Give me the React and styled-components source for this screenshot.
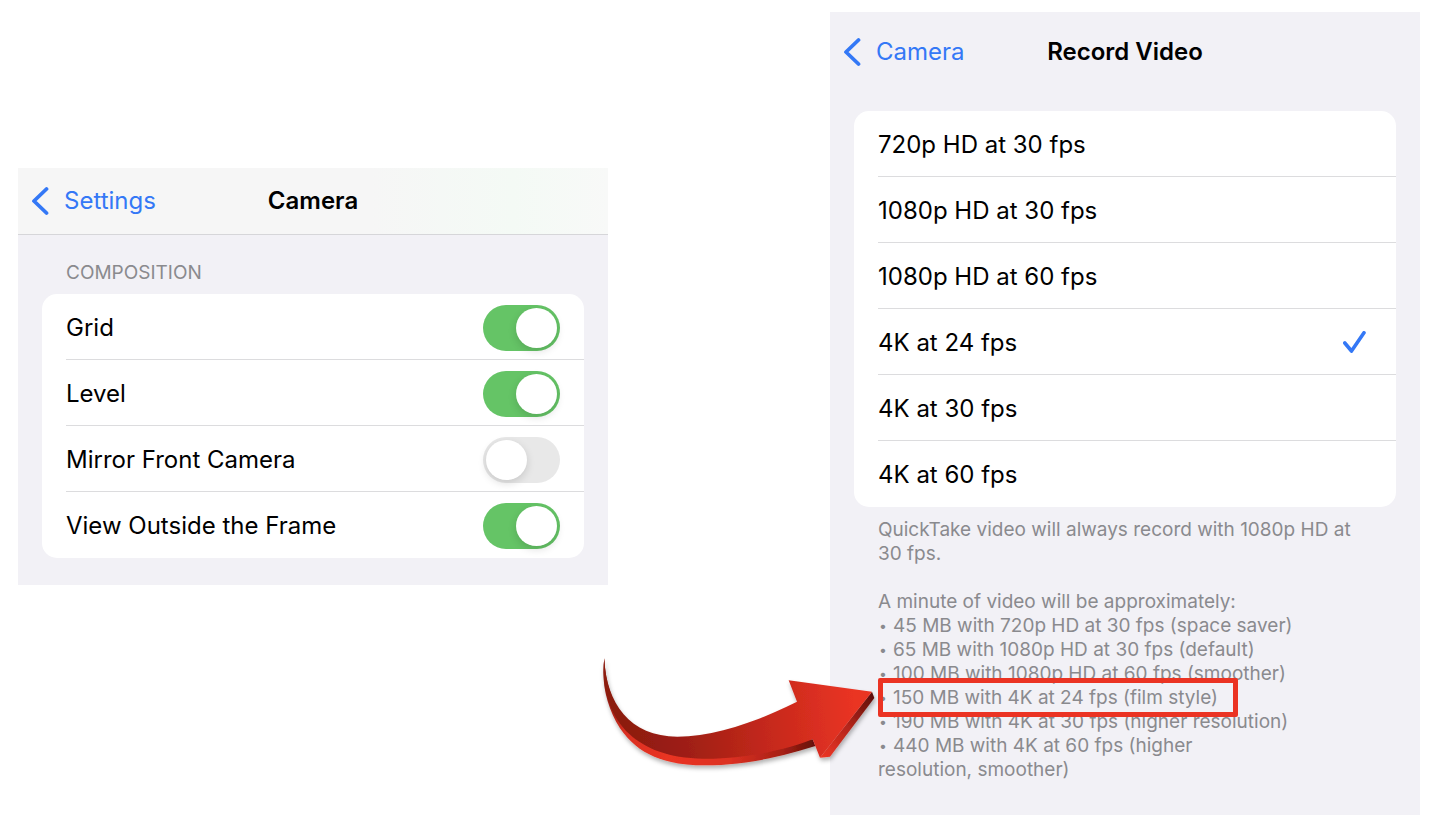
import React, { useState } from "react";
import styled, { createGlobalStyle } from "styled-components";

const compositionOptions = [
  { id: "grid", label: "Grid", on: true },
  { id: "level", label: "Level", on: true },
  { id: "mirror", label: "Mirror Front Camera", on: false },
  { id: "outside", label: "View Outside the Frame", on: true },
];

const videoFormats = [
  "720p HD at 30 fps",
  "1080p HD at 30 fps",
  "1080p HD at 60 fps",
  "4K at 24 fps",
  "4K at 30 fps",
  "4K at 60 fps",
];

const BackIcon = () => (
  <svg width="18" height="30" viewBox="0 0 18 30" fill="none" aria-hidden="true">
    <path
      d="M15.5 3 L3 15 L15.5 27"
      stroke="#3478f6"
      strokeWidth="3.8"
      strokeLinecap="round"
      strokeLinejoin="round"
    />
  </svg>
);

const CheckIcon = () => (
  <svg width="24" height="24" viewBox="0 0 24 24" fill="none" aria-hidden="true">
    <path
      d="M2.8 12 L9.5 20 L22 1.8"
      stroke="#3478f6"
      strokeWidth="3.6"
      strokeLinecap="round"
      strokeLinejoin="round"
    />
  </svg>
);

const Arrow = () => (
  <ArrowSvg viewBox="0 0 930 450" aria-hidden="true">
    <defs>
      <linearGradient id="face" gradientUnits="userSpaceOnUse" x1="100" y1="260" x2="830" y2="170">
        <stop offset="0" stopColor="#8c1a10" />
        <stop offset="0.25" stopColor="#9f1f14" />
        <stop offset="0.6" stopColor="#c7291c" />
        <stop offset="0.95" stopColor="#ea3424" />
      </linearGradient>
      <linearGradient id="rim" gradientUnits="userSpaceOnUse" x1="40" y1="0" x2="676" y2="0">
        <stop offset="0" stopColor="#8c1a10" />
        <stop offset="0.1" stopColor="#d92f20" />
        <stop offset="0.3" stopColor="#ea3424" />
        <stop offset="0.6" stopColor="#dc3022" />
        <stop offset="0.85" stopColor="#a52015" />
        <stop offset="1" stopColor="#64100a" />
      </linearGradient>
      <linearGradient id="tip" gradientUnits="userSpaceOnUse" x1="700" y1="350" x2="850" y2="165">
        <stop offset="0" stopColor="#ea3424" />
        <stop offset="0.5" stopColor="#b3251a" />
        <stop offset="1" stopColor="#5c0e08" />
      </linearGradient>
      <filter id="shadow" x="-10%" y="-10%" width="120%" height="130%">
        <feDropShadow dx="3" dy="9" stdDeviation="7" floodColor="#000" floodOpacity="0.3" />
      </filter>
    </defs>
    <g filter="url(#shadow)">
      <path
        d="M43 55 C33 130 50 200 90 265 C145 345 225 376 345 376 C450 376 560 355 676 318 L668 298 L300 320 L118 260 C70 200 45 130 43 55 Z"
        fill="url(#rim)"
      />
      <path d="M846 155 L853 174 L720 350 L690 353 Z" fill="url(#tip)" />
      <path
        d="M43 55 C48 190 120 290 262 290 C375 290 500 245 621 185 L596 121 L846 155 L690 353 L668 298 C560 340 440 357 340 356 C235 355 165 325 118 282 C55 225 33 130 43 55 Z"
        fill="url(#face)"
      />
    </g>
  </ArrowSvg>
);

const App = () => {
  const [options, setOptions] = useState(compositionOptions);
  const [format, setFormat] = useState("4K at 24 fps");

  const handleToggle = (id) => {
    setOptions(options.map((o) => (o.id === id ? { ...o, on: !o.on } : o)));
  };

  return (
    <>
      <GlobalStyle />
      <Page>
        <Panel $lowered>
          <Header $bar>
            <BackLink href="#settings">
              <BackIcon />
              Settings
            </BackLink>
            <Title>Camera</Title>
          </Header>
          <SectionLabel>COMPOSITION</SectionLabel>
          <Card>
            {options.map((o) => (
              <Row key={o.id} htmlFor={o.id}>
                <RowBody>
                  {o.label}
                  <Switch
                    id={o.id}
                    type="checkbox"
                    checked={o.on}
                    onChange={() => handleToggle(o.id)}
                  />
                </RowBody>
              </Row>
            ))}
          </Card>
        </Panel>

        <Panel>
          <Header>
            <BackLink href="#camera">
              <BackIcon />
              Camera
            </BackLink>
            <Title>Record Video</Title>
          </Header>
          <Card>
            {videoFormats.map((f) => (
              <Row key={f}>
                <RowBody $check>
                  {f}
                  <Radio
                    type="radio"
                    name="format"
                    checked={format === f}
                    onChange={() => setFormat(f)}
                  />
                  {format === f && <CheckIcon />}
                </RowBody>
              </Row>
            ))}
          </Card>
          <Notes>
            <p>QuickTake video will always record with 1080p HD at 30 fps.</p>
            <p>A minute of video will be approximately:</p>
            <ul>
              <li>45 MB with 720p HD at 30 fps (space saver)</li>
              <li>65 MB with 1080p HD at 30 fps (default)</li>
              <li>100 MB with 1080p HD at 60 fps (smoother)</li>
              <Highlighted>
                150 MB with 4K at 24 fps (film style)
                <Arrow />
              </Highlighted>
              <li>190 MB with 4K at 30 fps (higher resolution)</li>
              <li>
                440 MB with 4K at 60 fps (higher
                <br />
                resolution, smoother)
              </li>
            </ul>
          </Notes>
        </Panel>
      </Page>
    </>
  );
};

export default App;

const GlobalStyle = createGlobalStyle`
  * {
    box-sizing: border-box;
  }
  body {
    margin: 0;
    background: #fff;
    color: #000;
    font-family: Inter, "Liberation Sans", sans-serif;
    font-size: 24px;
  }
`;

const Page = styled.main`
  display: grid;
  grid-template-columns: 1fr 1fr;
  column-gap: 222px;
  align-items: start;
  padding: 12px 18px 10px;
`;

const Panel = styled.section`
  margin-top: ${(props) => (props.$lowered ? "156px" : "0")};
  padding-bottom: ${(props) => (props.$lowered ? "27px" : "33px")};
  background: #f2f1f6;
`;

const Header = styled.header`
  display: grid;
  grid-template-columns: 1fr auto 1fr;
  align-items: center;
  height: ${(props) => (props.$bar ? "67px" : "79px")};
  margin-bottom: ${(props) => (props.$bar ? "0" : "20px")};
  padding: 0 13px ${(props) => (props.$bar ? "1px" : "0")};
  background: ${(props) =>
    props.$bar
      ? "linear-gradient(90deg, #f6f6f6 60%, #f4faf5 84%, #f8f9f8 100%)"
      : "none"};
  border-bottom: ${(props) => (props.$bar ? "1px solid #d6d6d9" : "none")};
`;

const BackLink = styled.a`
  display: flex;
  align-items: center;
  gap: 15px;
  color: #3478f6;
  text-decoration: none;
`;

const Title = styled.h1`
  margin: 0;
  font-size: 24px;
  font-weight: 600;
`;

const SectionLabel = styled.h2`
  margin: 0;
  padding: 26px 48px 9px;
  color: #8a8a8e;
  font-size: 19px;
  font-weight: 400;
  line-height: 24px;
`;

const Card = styled.div`
  margin: 0 24px;
  overflow: hidden;
  background: #fff;
  border-radius: 15px;
`;

const RowBody = styled.span`
  display: flex;
  align-items: center;
  justify-content: space-between;
  height: 66px;
  padding-top: 2px;
  padding-right: ${(props) => (props.$check ? "30px" : "24px")};
  border-bottom: 1px solid #dcdcde;
`;

const Row = styled.label`
  display: block;
  padding-left: 24px;

  &:last-child ${RowBody} {
    border-bottom-color: transparent;
  }
`;

const Switch = styled.input`
  appearance: none;
  display: flex;
  width: 77px;
  height: 46px;
  margin: 0;
  padding: 3px;
  border-radius: 23px;
  background: #e8e8e8;

  &::before {
    content: "";
    width: 41px;
    height: 40px;
    border-radius: 50%;
    background: #fff;
    box-shadow: 0 3px 8px rgba(0, 0, 0, 0.14);
  }
  &:checked {
    justify-content: flex-end;
    background: #65c466;
  }
`;

const Radio = styled.input`
  appearance: none;
  width: 0;
  margin: 0 auto 0 0;
`;

const Notes = styled.div`
  padding: 11px 48px 0;
  color: #8a8a8e;
  font-size: 19px;
  line-height: 24px;

  p {
    margin: 0;
  }
  p + p {
    margin-top: 24px;
  }
  ul {
    margin: 0;
    padding: 0;
    list-style: none;
  }
  li::before {
    content: "•";
    display: inline-block;
    width: 14px;
    padding-left: 1px;
    font-size: 14px;
    line-height: 14px;
    vertical-align: 1px;
  }
`;

const Highlighted = styled.li`
  position: relative;
  width: fit-content;

  &::after {
    content: "";
    position: absolute;
    inset: -8px -20px -7px 0;
    border: 5px solid #eb3323;
    border-radius: 2px;
  }
`;

const ArrowSvg = styled.svg`
  position: absolute;
  top: -46px;
  left: -288px;
  width: 310px;
  height: 150px;
  pointer-events: none;
`;
